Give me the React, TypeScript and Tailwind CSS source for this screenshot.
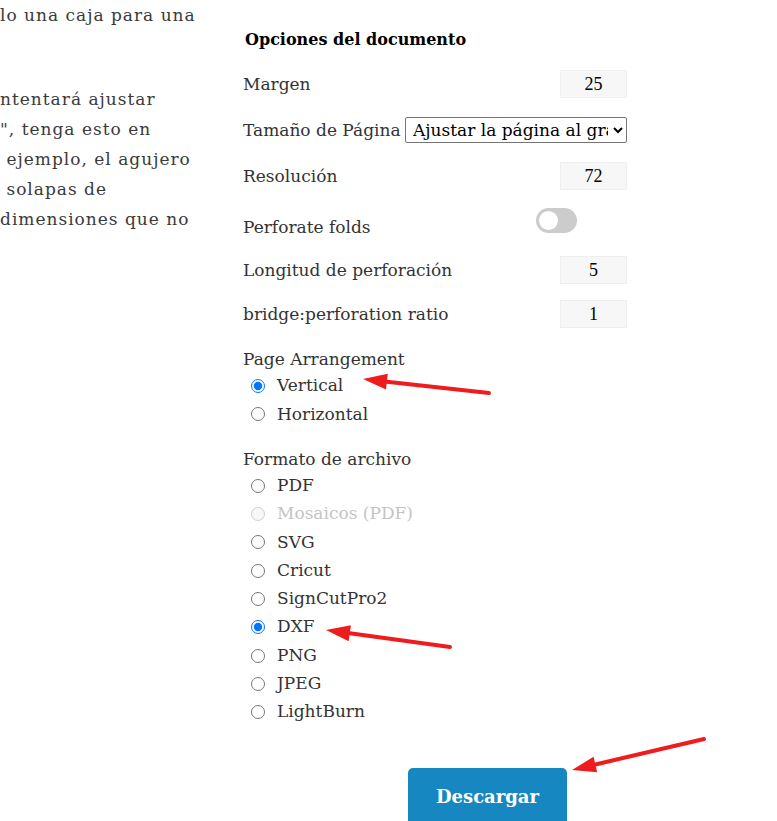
import React from 'react'

const LEFT_LINES = [
  { t: 'lo una caja para una', mt: 'mt-0' },
  { t: 'ntentará ajustar', mt: 'mt-[54px]' },
  { t: '", tenga esto en', mt: 'mt-0' },
  { t: ' ejemplo, el agujero', mt: 'mt-0' },
  { t: ' solapas de', mt: 'mt-0' },
  { t: 'dimensiones que no', mt: 'mt-0' },
]

const FORMATS = [
  { label: 'PDF' },
  { label: 'Mosaicos (PDF)', disabled: true },
  { label: 'SVG' },
  { label: 'Cricut' },
  { label: 'SignCutPro2' },
  { label: 'DXF', checked: true },
  { label: 'PNG' },
  { label: 'JPEG' },
  { label: 'LightBurn' },
]

const slab = 'font-["DejaVu_Serif",serif]'

function NumBox({ value }: { value: string }) {
  return (
    <div className='w-[67px] h-[28px] bg-[#f7f7f7] border border-[#efefef] flex items-center justify-center text-[18px] text-black font-["Liberation_Serif",serif]'>
      {value}
    </div>
  )
}

function Radio({ label, checked, disabled, name }: { label: string; checked?: boolean; disabled?: boolean; name: string }) {
  return (
    <label className={`flex items-center h-[28.3px] pl-[8px] ${disabled ? 'text-[#c4c4c4]' : 'text-[#333]'}`}>
      <input
        type="radio"
        name={name}
        defaultChecked={checked}
        disabled={disabled}
        className="w-[14px] h-[14px] m-0 mr-[12px] accent-[#0075ff]"
      />
      <span>{label}</span>
    </label>
  )
}

function Arrow({ x1, y1, x2, y2 }: { x1: number; y1: number; x2: number; y2: number }) {
  // tail (x1,y1) → tip (x2,y2)
  const a = Math.atan2(y2 - y1, x2 - x1)
  const len = 24
  const w = 8
  const bx = x2 - Math.cos(a) * len
  const by = y2 - Math.sin(a) * len
  const px = -Math.sin(a) * w
  const py = Math.cos(a) * w
  return (
    <g>
      <line x1={x1} y1={y1} x2={bx} y2={by} stroke="#ee1c1c" strokeWidth={4} strokeLinecap="round" />
      <polygon points={`${x2},${y2} ${bx + px},${by + py} ${bx - px},${by - py}`} fill="#ee1c1c" />
    </g>
  )
}

export default function App() {
  return (
    <div className={`relative w-[777px] h-[821px] overflow-hidden bg-white text-[17px] text-[#333] ${slab}`}>
      <div className="flex">
        {/* ── left text column (clipped) ── */}
        <div className="w-[243px] shrink-0 pt-0 leading-[30px] text-[#3a3a3a] tracking-[1px]">
          {LEFT_LINES.map((l, i) => (
            <div key={i} className={`whitespace-pre ${l.mt}`}>{l.t}</div>
          ))}
        </div>

        {/* ── document options ── */}
        <div className="w-[384px] shrink-0 pt-[30px]">
          <h3 className="pl-[2px] h-[20px] leading-[20px] text-[16px] font-bold text-black">Opciones del documento</h3>

          <div className="mt-[20px] flex items-center justify-between h-[28px]">
            <span className="pt-[2px]">Margen</span>
            <NumBox value="25" />
          </div>

          <div className="mt-[19px] flex items-center justify-between h-[26px]">
            <span className="whitespace-nowrap pt-[1px]">Tamaño de Página</span>
            <select className="w-[222px] h-[26px] border border-[#767676] rounded-[2px] bg-white text-black text-[17px] pl-[3px] pr-[2px]">
              <option>Ajustar la página al gráfico</option>
            </select>
          </div>

          <div className="mt-[19px] flex items-center justify-between h-[28px]">
            <span className="pt-[2px]">Resolución</span>
            <NumBox value="72" />
          </div>

          <div className="mt-[18px] flex items-end justify-between h-[32px]">
            <span className="leading-[26px]">Perforate folds</span>
            <div className="self-start w-[41px] h-[25px] rounded-full bg-[#cccccc] mr-[50px] flex items-center pl-[3px]">
              <div className="w-[19px] h-[19px] rounded-full bg-white" />
            </div>
          </div>

          <div className="mt-[16px] flex items-center justify-between h-[28px]">
            <span className="pt-[2px]">Longitud de perforación</span>
            <NumBox value="5" />
          </div>

          <div className="mt-[16px] flex items-center justify-between h-[28px]">
            <span className="pt-[2px]">bridge:perforation ratio</span>
            <NumBox value="1" />
          </div>

          <div className="mt-[17px] leading-[28px]">Page Arrangement</div>
          <div className="-mt-[1px]">
            <Radio name="arr" label="Vertical" checked />
            <Radio name="arr" label="Horizontal" />
          </div>

          <div className="mt-[16px] leading-[28px]">Formato de archivo</div>
          <div className="-mt-[1px]">
            {FORMATS.map((f) => (
              <Radio key={f.label} name="fmt" label={f.label} checked={f.checked} disabled={f.disabled} />
            ))}
          </div>

          <div className="mt-[42px] pl-[165px]">
            <button className="w-[159px] h-[60px] rounded-[5px] bg-[#1787c1] text-white text-[18px] font-bold pb-[4px]">
              Descargar
            </button>
          </div>
        </div>
      </div>

      {/* ── annotation arrows ── */}
      <svg className="absolute inset-0 pointer-events-none" width={777} height={821}>
        <Arrow x1={489} y1={393} x2={363} y2={379} />
        <Arrow x1={450} y1={647} x2={326} y2={630} />
        <Arrow x1={704} y1={739} x2={572} y2={770} />
      </svg>
    </div>
  )
}
